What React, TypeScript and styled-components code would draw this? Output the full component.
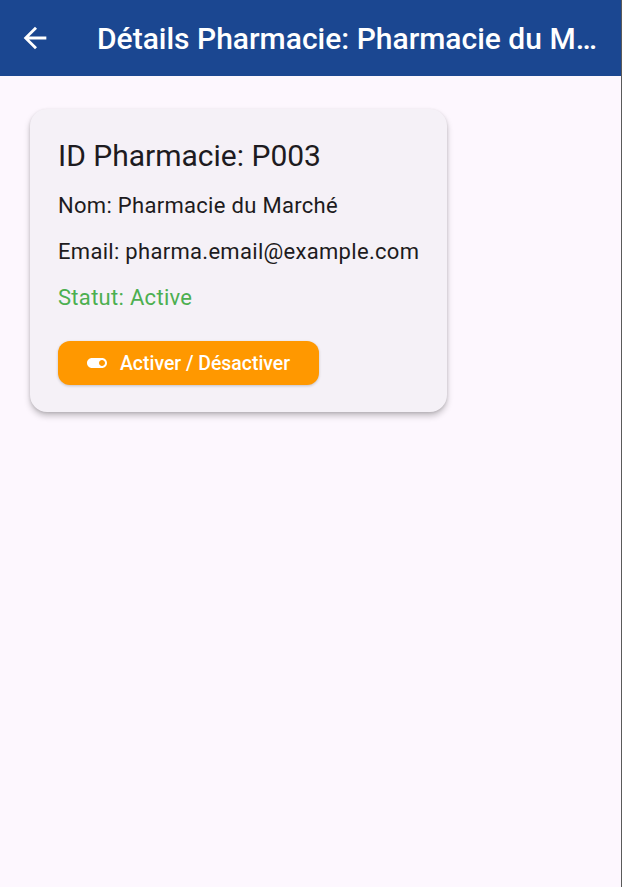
import React from 'react'
import styled, { createGlobalStyle } from 'styled-components'

const GlobalStyle = createGlobalStyle`
    html, body {
        margin: 0;
        padding: 0;
        background: #fdf7fe;
        font-family: Roboto, "Noto Sans", sans-serif;
    }
`;

const Page = styled.div`
    min-height: 887px;
    box-sizing: border-box;
    border-right: 1px solid #5a5a5a;
    background: #fdf7fe;
`;

const AppBar = styled.header`
    height: 76px;
    background-color: #1b4791;
    display: flex;
    align-items: center;
    padding: 0 22px 0 18px;
    gap: 45px;
    color: white;
`;

const BackButton = styled.button`
    background: none;
    border: none;
    padding: 0;
    display: flex;
    color: white;
    cursor: pointer;
`;

const Title = styled.h1`
    margin: 0;
    font-size: 30px;
    font-weight: 500;
    white-space: nowrap;
    overflow: hidden;
    text-overflow: ellipsis;
    flex: 1;
    min-width: 0;
`;

const Content = styled.main`
    padding: 33px 30px;
    display: flex;
    align-items: flex-start;
`;

const Card = styled.section`
    width: 417px;
    box-sizing: border-box;
    background-color: #f5f1f7;
    border-radius: 17px;
    padding: 27px 20px 27px 28px;
    box-shadow: 0 4px 6px rgba(0, 0, 0, 0.22), 0 1px 3px rgba(0, 0, 0, 0.12);
    display: flex;
    flex-direction: column;
    align-items: flex-start;
    color: #1d1b20;
`;

const CardTitle = styled.h2`
    margin: 0 0 14px;
    font-size: 30px;
    font-weight: 400;
    line-height: 40px;
    white-space: nowrap;
`;

type LineProps = {
    tone?: string;
}
const InfoLine = styled.p<LineProps>`
    margin: 0 0 14px;
    font-size: 22px;
    line-height: 32px;
    letter-spacing: 0.3px;
    white-space: nowrap;
    color: ${props => props.tone || '#1d1b20'};
`;

const ToggleButton = styled.button`
    margin-top: 13px;
    background-color: #ff9800;
    color: white;
    border: none;
    border-radius: 12px;
    height: 44px;
    width: 261px;
    padding: 0 0 0 27px;
    display: flex;
    align-items: center;
    gap: 11px;
    font-family: Roboto, sans-serif;
    font-size: 19.4px;
    font-weight: 500;
    box-shadow: 0 1px 3px rgba(0, 0, 0, 0.2);
    cursor: pointer;
`;

function App() {
    return (
        <Page>
            <GlobalStyle />
            <AppBar>
                <BackButton aria-label="Retour">
                    <svg width="34" height="34" viewBox="0 0 24 24" fill="white">
                        <path d="M20 11H7.83l5.59-5.59L12 4l-8 8 8 8 1.41-1.41L7.83 13H20v-2z" />
                    </svg>
                </BackButton>
                <Title>Détails Pharmacie: Pharmacie du Marché</Title>
            </AppBar>
            <Content>
                <Card>
                    <CardTitle>ID Pharmacie: P003</CardTitle>
                    <InfoLine>Nom: Pharmacie du Marché</InfoLine>
                    <InfoLine>Email: pharma.email@example.com</InfoLine>
                    <InfoLine tone="#4caf50">Statut: Active</InfoLine>
                    <ToggleButton>
                        <svg width="24" height="24" viewBox="0 0 24 24" fill="white">
                            <path d="M17 7H7c-2.76 0-5 2.24-5 5s2.24 5 5 5h10c2.76 0 5-2.24 5-5s-2.24-5-5-5zm0 8c-1.66 0-3-1.34-3-3s1.34-3 3-3 3 1.34 3 3-1.34 3-3 3z" />
                        </svg>
                        Activer / Désactiver
                    </ToggleButton>
                </Card>
            </Content>
        </Page>
    )
}

export default App
